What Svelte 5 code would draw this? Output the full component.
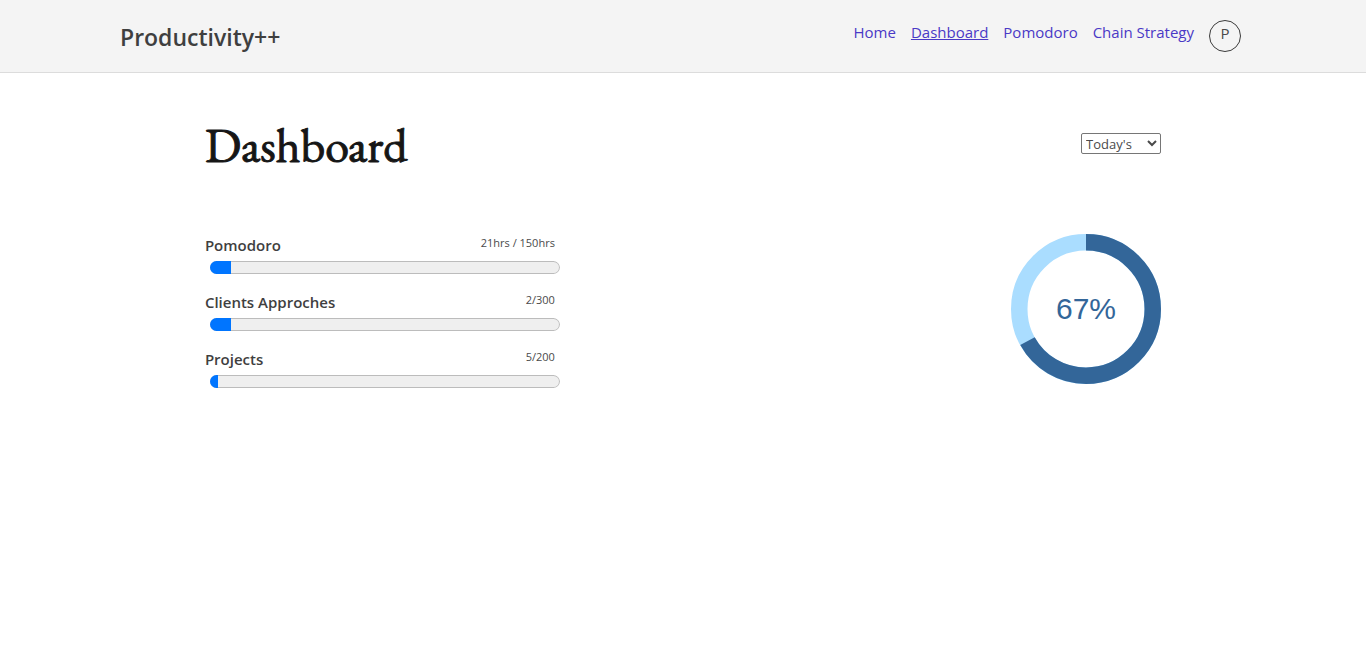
<script>
  let period = $state('today');
  const links = [
    { label: 'Home', href: '#home' },
    { label: 'Dashboard', href: '#dashboard', active: true },
    { label: 'Pomodoro', href: '#pomodoro' },
    { label: 'Chain Strategy', href: '#chain' }
  ];
  const goals = [
    { id: 'pomodoro', name: 'Pomodoro', status: '21hrs / 150hrs', percent: 6 },
    { id: 'clients', name: 'Clients Approches', status: '2/300', percent: 6 },
    { id: 'projects', name: 'Projects', status: '5/200', percent: 2.3 }
  ];
  const total = 67;
</script>

<header>
  <div class="brand">Productivity++</div>
  <nav>
    {#each links as link}
      <a href={link.href} class:active={link.active}>{link.label}</a>
    {/each}
    <button type="button" class="avatar" aria-label="P, profile">P</button>
  </nav>
</header>

<main>
  <div class="heading">
    <h1>Dashboard</h1>
    <select aria-label="Period" bind:value={period}>
      <option value="today">Today's</option>
      <option value="week">Weekly</option>
      <option value="month">Monthly</option>
    </select>
  </div>
  <div class="content">
    <section class="goals">
      {#each goals as goal}
        <div class="goal">
          <div class="labels">
            <label for={goal.id}>{goal.name}</label>
            <span>{goal.status}</span>
          </div>
          <progress id={goal.id} max="100" value={goal.percent}></progress>
        </div>
      {/each}
    </section>
    <svg class="donut" viewBox="0 0 150 150" role="img" aria-label="{total}% complete">
      <circle cx="75" cy="75" r="66.75" fill="none" stroke="#aaddff" stroke-width="16.5" />
      <circle cx="75" cy="75" r="66.75" fill="none" stroke="#336699" stroke-width="16.5"
        pathLength="100" stroke-dasharray="{total} 100" transform="rotate(-90 75 75)" />
      <text x="75" y="85" text-anchor="middle">{total}%</text>
    </svg>
  </div>
</main>

<style>
  :global(body) {
    margin: 0;
    background: #fff;
    color: #3f3f3f;
    font-family: "Open Sans", "Noto Sans", sans-serif;
  }
  header {
    display: flex;
    justify-content: space-between;
    align-items: flex-start;
    padding: 20px 125px 20px 120px;
    background: #f4f4f4;
    border-bottom: 1px solid #dcdcdc;
  }
  .brand {
    font-size: 23px;
    font-weight: 600;
    line-height: 32px;
    padding-top: 1px;
    margin-bottom: -1px;
  }
  nav {
    display: flex;
    gap: 15px;
    font-size: 15px;
    line-height: 24px;
  }
  nav a {
    color: #4a39c6;
    text-decoration: none;
  }
  nav a.active {
    text-decoration: underline;
  }
  .avatar {
    box-sizing: border-box;
    width: 32px;
    height: 32px;
    padding: 0 0 6px;
    border: 1px solid #3b3b3b;
    border-radius: 50%;
    background: transparent;
    color: #4a4a4a;
    font: 15px/24px "Open Sans", sans-serif;
  }
  main {
    padding: 37px 15%;
  }
  .heading {
    display: flex;
    justify-content: space-between;
    align-items: flex-start;
  }
  h1 {
    margin: 0;
    color: #161616;
    font: 400 48px/70px "EB Garamond", "Liberation Serif", serif;
    -webkit-text-stroke: 1px #161616;
  }
  select {
    width: 80px;
    height: 21px;
    margin-top: 23px;
    padding: 0;
    border: 1px solid #767676;
    border-radius: 2px;
    background: #fff;
    color: #4a4a4a;
    font: 13px "Open Sans", sans-serif;
  }
  .content {
    display: flex;
    justify-content: space-between;
    align-items: flex-start;
    padding-top: 54px;
  }
  .goals {
    display: flex;
    flex-direction: column;
    gap: 17px;
    width: 355px;
  }
  .labels {
    display: flex;
    justify-content: space-between;
    padding-right: 5px;
    margin-bottom: 5px;
  }
  label {
    font-size: 15px;
    font-weight: 600;
    line-height: 22px;
  }
  .labels span {
    color: #4a4a4a;
    font-size: 11px;
    line-height: 17px;
  }
  progress {
    display: block;
    appearance: none;
    width: 350px;
    height: 13px;
    margin-left: 5px;
    border: none;
    border-radius: 7px;
    overflow: hidden;
    background: #efefef;
  }
  progress::-webkit-progress-bar {
    border-radius: 7px;
    background: #efefef;
    box-shadow: inset 0 0 0 1px #bcbcbc;
  }
  progress::-webkit-progress-value {
    background: #0075ff;
  }
  .donut {
    width: 150px;
    height: 150px;
  }
  .donut text {
    fill: #336699;
    font: 30px "Liberation Sans", sans-serif;
  }
</style>
